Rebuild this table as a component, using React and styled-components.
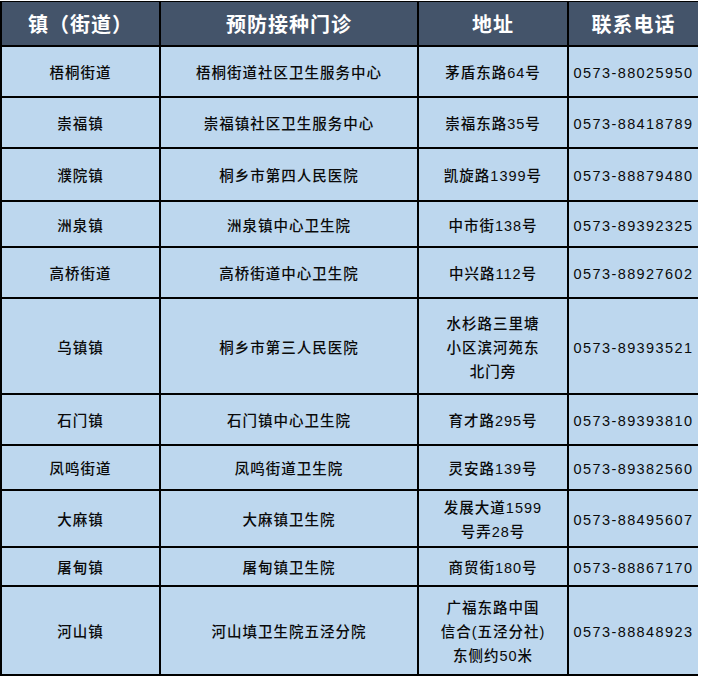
import React from "react";
import styled, { createGlobalStyle } from "styled-components";

const GlobalStyle = createGlobalStyle`
  body {
    margin: 0;
    background: #ffffff;
    font-family: "Liberation Sans", "Noto Sans CJK SC", sans-serif;
  }
`;

const Table = styled.div`
  width: 698px;
  margin-top: 1px;
  padding: 1px 0 2px 2px;
  box-sizing: border-box;
  background: #000000;
  display: flex;
  flex-direction: column;
  gap: 2px;
`;

const Row = styled.div`
  display: grid;
  grid-template-columns: 157px 256px 148px 129px;
  gap: 2px;
  height: ${(p) => p.$h}px;
`;

const Cell = styled.div`
  display: flex;
  flex-direction: column;
  align-items: center;
  justify-content: center;
  padding-top: 3px;
  box-sizing: border-box;
  text-align: center;
  background: ${(p) => (p.$head ? "#44546a" : "#bdd7ee")};
  color: ${(p) => (p.$head ? "#ffffff" : "#0a0a0a")};
  font-size: ${(p) => (p.$head ? "20px" : "14.5px")};
  font-weight: ${(p) => (p.$head ? 700 : 500)};
  letter-spacing: ${(p) => (p.$wide ? "1.4px" : "1px")};
  line-height: 24px;
  white-space: nowrap;
`;

const Line = styled.span`
  display: block;
`;

const rows = [
  { h: 49, town: "梧桐街道", clinic: "梧桐街道社区卫生服务中心", addr: ["茅盾东路64号"], tel: "0573-88025950" },
  { h: 49, town: "崇福镇", clinic: "崇福镇社区卫生服务中心", addr: ["崇福东路35号"], tel: "0573-88418789" },
  { h: 51, town: "濮院镇", clinic: "桐乡市第四人民医院", addr: ["凯旋路1399号"], tel: "0573-88879480" },
  { h: 44, town: "洲泉镇", clinic: "洲泉镇中心卫生院", addr: ["中市街138号"], tel: "0573-89392325" },
  { h: 49, town: "高桥街道", clinic: "高桥街道中心卫生院", addr: ["中兴路112号"], tel: "0573-88927602" },
  { h: 94, town: "乌镇镇", clinic: "桐乡市第三人民医院", addr: ["水杉路三里塘", "小区滨河苑东", "北门旁"], tel: "0573-89393521" },
  { h: 49, town: "石门镇", clinic: "石门镇中心卫生院", addr: ["育才路295号"], tel: "0573-89393810" },
  { h: 43, town: "凤鸣街道", clinic: "凤鸣街道卫生院", addr: ["灵安路139号"], tel: "0573-89382560" },
  { h: 55, town: "大麻镇", clinic: "大麻镇卫生院", addr: ["发展大道1599", "号弄28号"], tel: "0573-88495607" },
  { h: 37, town: "屠甸镇", clinic: "屠甸镇卫生院", addr: ["商贸街180号"], tel: "0573-88867170" },
  { h: 87, town: "河山镇", clinic: "河山填卫生院五泾分院", addr: ["广福东路中国", "信合(五泾分社)", "东侧约50米"], tel: "0573-88848923" },
];

export default function App() {
  return (
    <>
      <GlobalStyle />
      <Table>
        <Row $h={43}>
          <Cell $head>镇（街道）</Cell>
          <Cell $head>预防接种门诊</Cell>
          <Cell $head>地址</Cell>
          <Cell $head>联系电话</Cell>
        </Row>
        {rows.map((r) => (
          <Row key={r.town} $h={r.h}>
            <Cell>{r.town}</Cell>
            <Cell>{r.clinic}</Cell>
            <Cell>
              {r.addr.map((l) => (
                <Line key={l}>{l}</Line>
              ))}
            </Cell>
            <Cell $wide>{r.tel}</Cell>
          </Row>
        ))}
      </Table>
    </>
  );
}
